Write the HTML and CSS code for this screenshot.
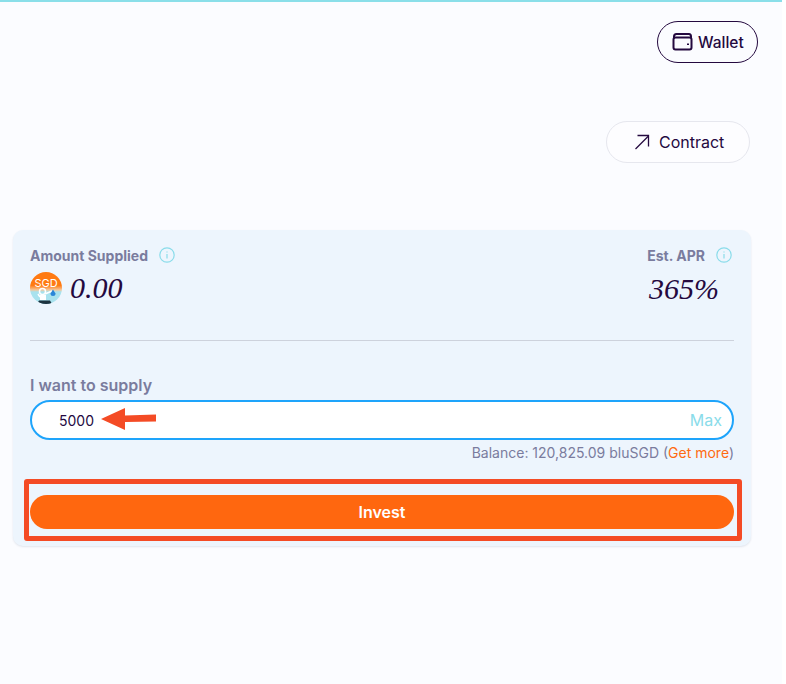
FILE: index.html
```html
<!DOCTYPE html>
<html lang="en">

<head>
    <meta charset="UTF-8">
    <meta name="viewport" content="width=device-width, initial-scale=1.0">
    <title>Invest</title>
    <link rel="stylesheet" href="styles.css">
</head>

<body>
    <div class="page">
        <div class="wallet-row">
            <button class="wallet-btn">
                <svg width="22" height="20" viewBox="0 0 22 20" fill="none" stroke="#24093f" stroke-width="2">
                    <path d="M2 6.5V4.500C2 3 3 2 4.500 2H17C18 2 19 3 19 4.500V6" />
                    <rect x="1.500" y="5.500" width="18" height="12" rx="2" />
                    <path d="M16 11.500V13" />
                </svg>
                Wallet
            </button>
        </div>

        <div class="contract-row">
            <button class="contract-btn">
                <svg width="16" height="16" viewBox="0 0 16 16" fill="none" stroke="#24093f" stroke-width="1.300">
                    <path d="M1.500 15L14.500 2" />
                    <path d="M3.500 1.500H14.500V12.500" />
                </svg>
                Contract
            </button>
        </div>

        <div class="card">
            <div class="stats">
                <div class="stat">
                    <div class="stat-label">Amount Supplied
                        <svg class="info" width="16" height="16" viewBox="0 0 16 16" fill="none" stroke="#8adcea" stroke-width="1.200">
                            <circle cx="8" cy="8" r="7.200" />
                            <path d="M8 7V11.500M8 4.500V5.500" />
                        </svg>
                    </div>
                    <div class="stat-value">
                        <svg class="coin" width="32" height="32" viewBox="0 0 32 32">
                            <defs>
                                <clipPath id="coinClip">
                                    <circle cx="16" cy="16" r="16" />
                                </clipPath>
                                <linearGradient id="coinFade" x1="0" y1="0" x2="0" y2="1">
                                    <stop offset="0.420" stop-color="#ff7a12" />
                                    <stop offset="0.560" stop-color="#f7c79a" />
                                    <stop offset="0.620" stop-color="#a8e2ee" />
                                </linearGradient>
                            </defs>
                            <g clip-path="url(#coinClip)">
                                <rect width="32" height="32" fill="url(#coinFade)" />
                                <text x="16" y="15" class="coin-text">SGD</text>
                                <circle cx="12.500" cy="19.500" r="3" fill="none" stroke="#ffffff" stroke-width="1.500" />
                                <path d="M10 23H16V28H10Z" fill="#ffffff" />
                                <path d="M15 22L22 19M8 22L10 25" stroke="#ffffff" stroke-width="1.500" />
                                <path d="M23 17.500L25.500 21.500A2.500 2.500 0 0 1 20.500 21.500Z" fill="#2a86d8" />
                                <path d="M7 32L9 28.500H20L22 32Z" fill="#1d3340" />
                            </g>
                        </svg>
                        <span>0.00</span>
                    </div>
                </div>
                <div class="stat stat-right">
                    <div class="stat-label">Est. APR
                        <svg class="info" width="16" height="16" viewBox="0 0 16 16" fill="none" stroke="#8adcea" stroke-width="1.200">
                            <circle cx="8" cy="8" r="7.200" />
                            <path d="M8 7V11.500M8 4.500V5.500" />
                        </svg>
                    </div>
                    <div class="stat-value apr"><span>365%</span></div>
                </div>
            </div>

            <hr class="divider">

            <div class="supply-label">I want to supply</div>
            <div class="supply-input">
                <span class="supply-amount">5000</span>
                <span class="max">Max</span>
            </div>
            <div class="balance">Balance: 120,825.09 bluSGD (<a class="get-more">Get more</a>)</div>

            <button class="invest-btn">Invest</button>

            <!-- annotations on top of the screenshot -->
            <svg class="arrow" width="58" height="24" viewBox="0 0 58 24">
                <path d="M1 12L25 1V8.500L56 7.500V14.500L25 15V23Z" fill="#f44b25" />
            </svg>
            <div class="highlight"></div>
        </div>
    </div>
</body>

</html>
```

FILE: styles.css
```css
* {
    box-sizing: border-box;
}

html,
body {
    margin: 0;
    height: 100%;
    background-color: #ffffff;
}

body {
    font-family: Inter, "Liberation Sans", sans-serif;
    color: #24093f;
}

button {
    font-family: inherit;
    color: inherit;
    cursor: pointer;
}

.page {
    width: 782px;
    height: 684px;
    overflow: hidden;
    background-color: #fbfcff;
    border-top: 2px solid #8adfe9;
}

.wallet-row {
    display: flex;
    justify-content: flex-end;
    padding: 19px 24px 0 0;
}

.wallet-btn {
    display: flex;
    align-items: center;
    gap: 4px;
    width: 101px;
    height: 42px;
    padding: 0 0 0 14px;
    font-size: 15.500px;
    font-weight: 500;
    background: transparent;
    border: 1px solid #24093f;
    border-radius: 21px;
}

.contract-row {
    display: flex;
    justify-content: flex-end;
    padding: 58px 32px 0 0;
}

.contract-btn {
    display: flex;
    align-items: center;
    gap: 9px;
    width: 144px;
    height: 42px;
    padding: 0 0 0 27px;
    font-size: 16px;
    background: #fdfdff;
    border: 1px solid #e6e7ee;
    border-radius: 21px;
}

.card {
    position: relative;
    width: 738px;
    height: 316px;
    margin: 67px 0 0 13px;
    padding: 16px 17px 0;
    background-color: #edf5fd;
    border-radius: 10px;
    box-shadow: 0 1px 2px rgba(40, 60, 100, 0.12);
}

.stats {
    display: flex;
    justify-content: space-between;
    height: 94px;
}

.stat-label {
    display: flex;
    align-items: center;
    gap: 11px;
    height: 18px;
    font-size: 14px;
    font-weight: 700;
    color: #7a7c9e;
}

.stat-value {
    display: flex;
    align-items: center;
    gap: 8px;
    height: 32px;
    margin-top: 8px;
    font-family: "Liberation Serif", serif;
    font-style: italic;
    font-size: 30px;
}

.stat-right {
    display: flex;
    flex-direction: column;
    align-items: flex-end;
    padding-right: 2px;
}

.apr {
    margin-top: 9px;
    margin-right: 13px;
}

.coin-text {
    font-family: Inter, sans-serif;
    font-style: normal;
    font-size: 11px;
    fill: #ffffff;
    text-anchor: middle;
}

.divider {
    height: 1px;
    margin: 0;
    background-color: #cdd2dc;
    border: 0;
}

.supply-label {
    margin-top: 35px;
    height: 18px;
    font-size: 16px;
    line-height: 18px;
    font-weight: 600;
    color: #7a7c9e;
}

.supply-input {
    display: flex;
    align-items: center;
    justify-content: space-between;
    height: 40px;
    margin-top: 6px;
    padding: 0 10px 0 27px;
    font-size: 14px;
    background-color: #ffffff;
    border: 2px solid #1ea4fb;
    border-radius: 20px;
}

.max {
    font-size: 16px;
    color: #8adcea;
}

.balance {
    margin-top: 5px;
    height: 16px;
    font-size: 14px;
    line-height: 16px;
    text-align: right;
    color: #7a7c9e;
}

.get-more {
    color: #ff6a10;
}

.invest-btn {
    display: block;
    width: 704px;
    height: 34px;
    margin-top: 34px;
    font-size: 16px;
    font-weight: 600;
    color: #ffffff;
    background-color: #ff670f;
    border: 0;
    border-radius: 17px;
}

.arrow {
    position: absolute;
    left: 87px;
    top: 177px;
}

.highlight {
    position: absolute;
    left: 11px;
    top: 249px;
    width: 718px;
    height: 62px;
    border: 5px solid #f44b25;
    border-radius: 3px;
    pointer-events: none;
}
```
